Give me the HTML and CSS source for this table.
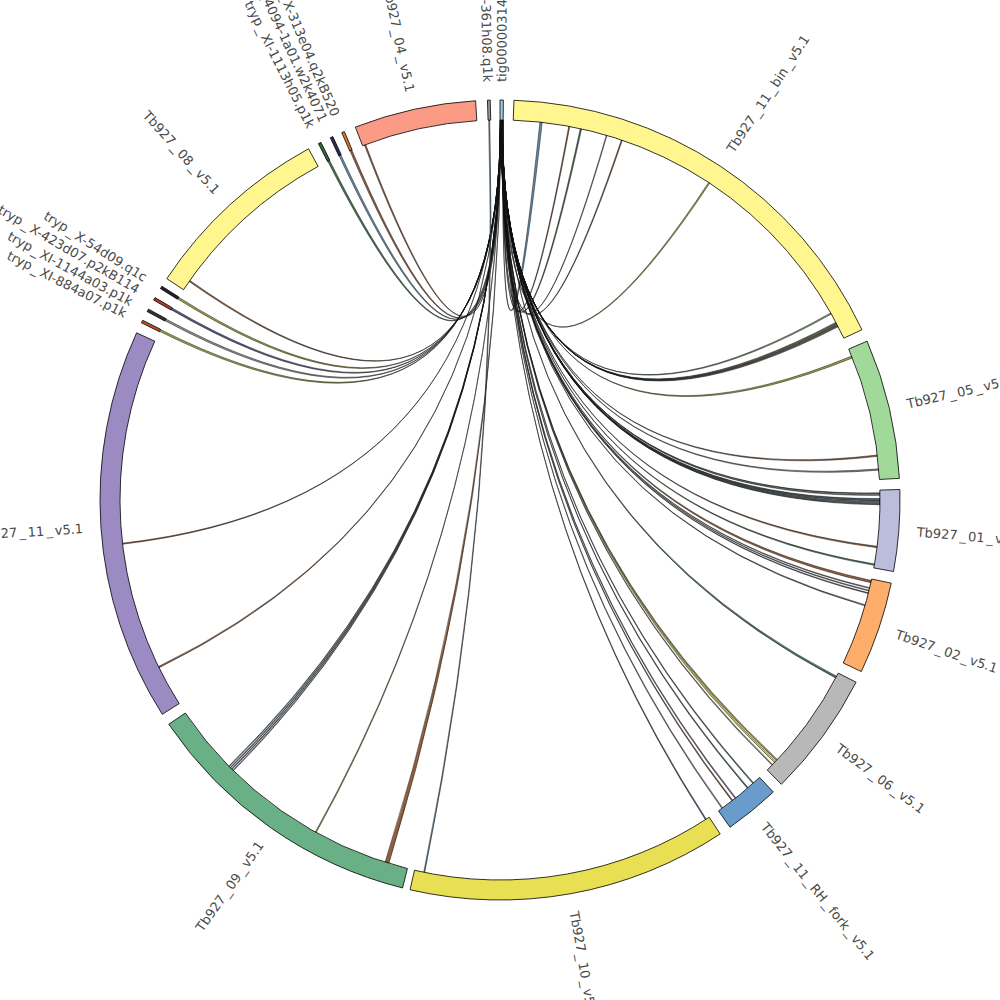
FILE: index.html
```html
<!DOCTYPE html>
<html lang="en">
<head>
<meta charset="utf-8">
<title>Chord diagram</title>
<link rel="stylesheet" href="styles.css">
</head>
<body>
<svg id="chart" class="chart" xmlns="http://www.w3.org/2000/svg" viewBox="0 0 1000 1000" width="1000" height="1000">
  <g id="chords" class="chords"></g>
  <g id="segs" class="segs"></g>
  <g id="labels" class="labels"></g>
</svg>
<script src="script.js"></script>
</body>
</html>
```

FILE: styles.css
```css
html, body {
  margin: 0;
  padding: 0;
  background: #ffffff;
}
.chart {
  display: block;
  width: 1000px;
  height: 1000px;
  background: #ffffff;
}
.seg {
  stroke: #000000;
  stroke-width: 0.8;
  stroke-linejoin: miter;
}
.chord {
  stroke: #111111;
  stroke-width: 0.5;
  fill-opacity: 0.95;
}
.label {
  font-family: "DejaVu Sans", "Liberation Sans", sans-serif;
  font-size: 13px;
  fill: #4a4a4a;
  dominant-baseline: central;
}
```

FILE: script.js
```js
(function () {
  var NS = 'http://www.w3.org/2000/svg';
  var CX = 500, CY = 500, RO = 400, RI = 380, RL = 418;
  var gChords = document.getElementById('chords');
  var gSegs = document.getElementById('segs');
  var gLabels = document.getElementById('labels');

  function pt(r, deg) {
    var a = deg * Math.PI / 180;
    return (CX + r * Math.sin(a)).toFixed(2) + ',' + (CY - r * Math.cos(a)).toFixed(2);
  }
  function el(tag, attrs, cls) {
    var e = document.createElementNS(NS, tag);
    for (var k in attrs) e.setAttribute(k, attrs[k]);
    if (cls) e.setAttribute('class', cls);
    return e;
  }

  var segs = [
    ['tig00000314', 0.0, 0.48, '#9ecae1'],
    ['Tb927_11_bin_v5.1', 2.0, 64.8, '#fff68f'],
    ['Tb927_05_v5.1', 66.6, 86.9, '#a1d99b'],
    ['Tb927_01_v5.1', 88.5, 100.3, '#bcbddc'],
    ['Tb927_02_v5.1', 102.0, 115.4, '#fdae6b'],
    ['Tb927_06_v5.1', 117.1, 135.3, '#b8b8b8'],
    ['Tb927_11_RH_fork_v5.1', 136.9, 144.9, '#6a9ccb'],
    ['Tb927_10_v5.1', 146.6, 193.0, '#e8e052'],
    ['Tb927_09_v5.1', 194.1, 235.9, '#6ab086'],
    ['Tb927_11_v5.1', 237.6, 294.7, '#9b8bc2'],
    ['tryp_XI-884a07.p1k', 296.3, 296.7, '#c0502b'],
    ['tryp_XI-1144a03.p1k', 298.1, 298.5, '#333333'],
    ['tryp_X-423d07.p2kB114', 300.0, 300.4, '#b03a2b'],
    ['tryp_X-54d09.q1c', 301.9, 302.3, '#222222'],
    ['Tb927_08_v5.1', 303.6, 331.4, '#fff68f'],
    ['tryp_XI-1113h05.p1k', 333.0, 333.4, '#2e6b3a'],
    ['tryp_4094-1a01.w2k4071', 334.9, 335.3, '#2a2f5a'],
    ['tryp_X-313e04.q2kB520', 336.7, 337.1, '#e0792a'],
    ['Tb927_04_v5.1', 338.8, 356.5, '#fb9a85'],
    ['tryp_XI-361h08.q1k', 358.2, 358.6, '#9a9a9a']
  ];

  var C = {
    br: '#8a5634', ol: '#9c9a3c', st: '#5b86a6', dg: '#3f6b4b', gy: '#8a8a8a',
    nv: '#4a4f7a', ye: '#d9c93b', pu: '#6c5f92', gr: '#6e9a72'
  };

  var chords = [
    [6.2, 0.35, 'st'], [10.5, 0.15, 'br'], [12.3, 0.2, 'dg'], [16.3, 0.1, 'gy'], [18.7, 0.15, 'br'],
    [33.4, 0.2, 'ol'],
    [60.6, 0.2, 'gr'], [62.2, 0.15, 'gy'], [62.4, 0.15, 'ol'], [62.6, 0.15, 'br'], [62.8, 0.15, 'st'],
    [67.9, 0.3, 'ol'], [83.3, 0.2, 'br'], [85.4, 0.2, 'gy'],
    [88.98, 0.12, 'dg'], [89.24, 0.12, 'gy'], [89.85, 0.12, 'st'], [90.05, 0.12, 'nv'],
    [90.26, 0.12, 'gy'], [90.46, 0.12, 'st'], [90.66, 0.12, 'dg'],
    [97.1, 0.2, 'br'], [99.8, 0.2, 'dg'],
    [102.4, 0.35, 'br'], [103.4, 0.12, 'gy'], [103.8, 0.12, 'gy'], [104.2, 0.12, 'nv'], [106.1, 0.15, 'dg'],
    [117.8, 0.3, 'dg'],
    [133.2, 0.2, 'ol'], [133.6, 0.25, 'ye'], [134.2, 0.15, 'gy'],
    [138.2, 0.15, 'dg'], [139.3, 0.15, 'nv'], [141.7, 0.15, 'pu'], [142.3, 0.15, 'br'], [144.2, 0.15, 'gy'],
    [147.2, 0.15, 'nv'],
    [197.3, 0.6, 'br'], [209, 0.15, 'ol'],
    [224.6, 0.12, 'gy'], [224.9, 0.12, 'nv'], [225.2, 0.12, 'dg'], [225.5, 0.12, 'st'],
    [243.9, 0.2, 'br'], [263.4, 0.15, 'br'],
    [296.5, 0.3, 'ol'], [298.3, 0.3, 'gy'], [300.2, 0.3, 'nv'], [302.1, 0.3, 'ol'],
    [305.2, 0.2, 'br'],
    [333.2, 0.3, 'dg'], [335.1, 0.3, 'st'], [336.9, 0.3, 'br'],
    [339.2, 0.2, 'br']
  ];

  function ribbon(s0, s1, t0, t1) {
    var a = pt(RI, s0), b = pt(RI, s1), c = pt(RI, t0), d = pt(RI, t1);
    return 'M' + a + ' A' + RI + ' ' + RI + ' 0 0 1 ' + b +
      ' Q' + CX + ',' + CY + ' ' + c +
      ' A' + RI + ' ' + RI + ' 0 0 1 ' + d +
      ' Q' + CX + ',' + CY + ' ' + a + ' Z';
  }

  var n = chords.length;
  var sStart = 0.44, sEnd = 0.03, step = (sStart - sEnd) / (n - 1);
  chords.forEach(function (ch, i) {
    var s0 = sStart - i * step, s1 = s0 + 0.006;
    var t0 = ch[0] - ch[1] / 2, t1 = ch[0] + ch[1] / 2;
    gChords.appendChild(el('path', { d: ribbon(s0, s1, t0, t1), fill: C[ch[2]] }, 'chord'));
  });
  // link from the small grey contig down to Tb927_10
  gChords.appendChild(el('path', { d: ribbon(358.3, 358.45, 191.42, 191.58), fill: C.st }, 'chord'));

  segs.forEach(function (s) {
    var name = s[0], a0 = s[1], a1 = s[2];
    var large = (a1 - a0) > 180 ? 1 : 0;
    var d = 'M' + pt(RO, a0) + ' A' + RO + ' ' + RO + ' 0 ' + large + ' 1 ' + pt(RO, a1) +
      ' L' + pt(RI, a1) + ' A' + RI + ' ' + RI + ' 0 ' + large + ' 0 ' + pt(RI, a0) + ' Z';
    gSegs.appendChild(el('path', { d: d, fill: s[3] }, 'seg'));

    var m = (a0 + a1) / 2;
    var right = m < 180;
    var rot = right ? m - 90 : m - 270;
    var t = el('text', {
      transform: 'translate(' + pt(RL, m) + ') rotate(' + rot.toFixed(2) + ')',
      'text-anchor': right ? 'start' : 'end'
    }, 'label');
    var parts = name.split('_');
    parts.forEach(function (p, i) {
      if (i === 0) {
        t.appendChild(document.createTextNode(p));
      } else {
        var u = el('tspan', { dx: '2' });
        u.textContent = '_';
        t.appendChild(u);
        var r = el('tspan', { dx: '2' });
        r.textContent = p;
        t.appendChild(r);
      }
    });
    gLabels.appendChild(t);
  });
})();
```
